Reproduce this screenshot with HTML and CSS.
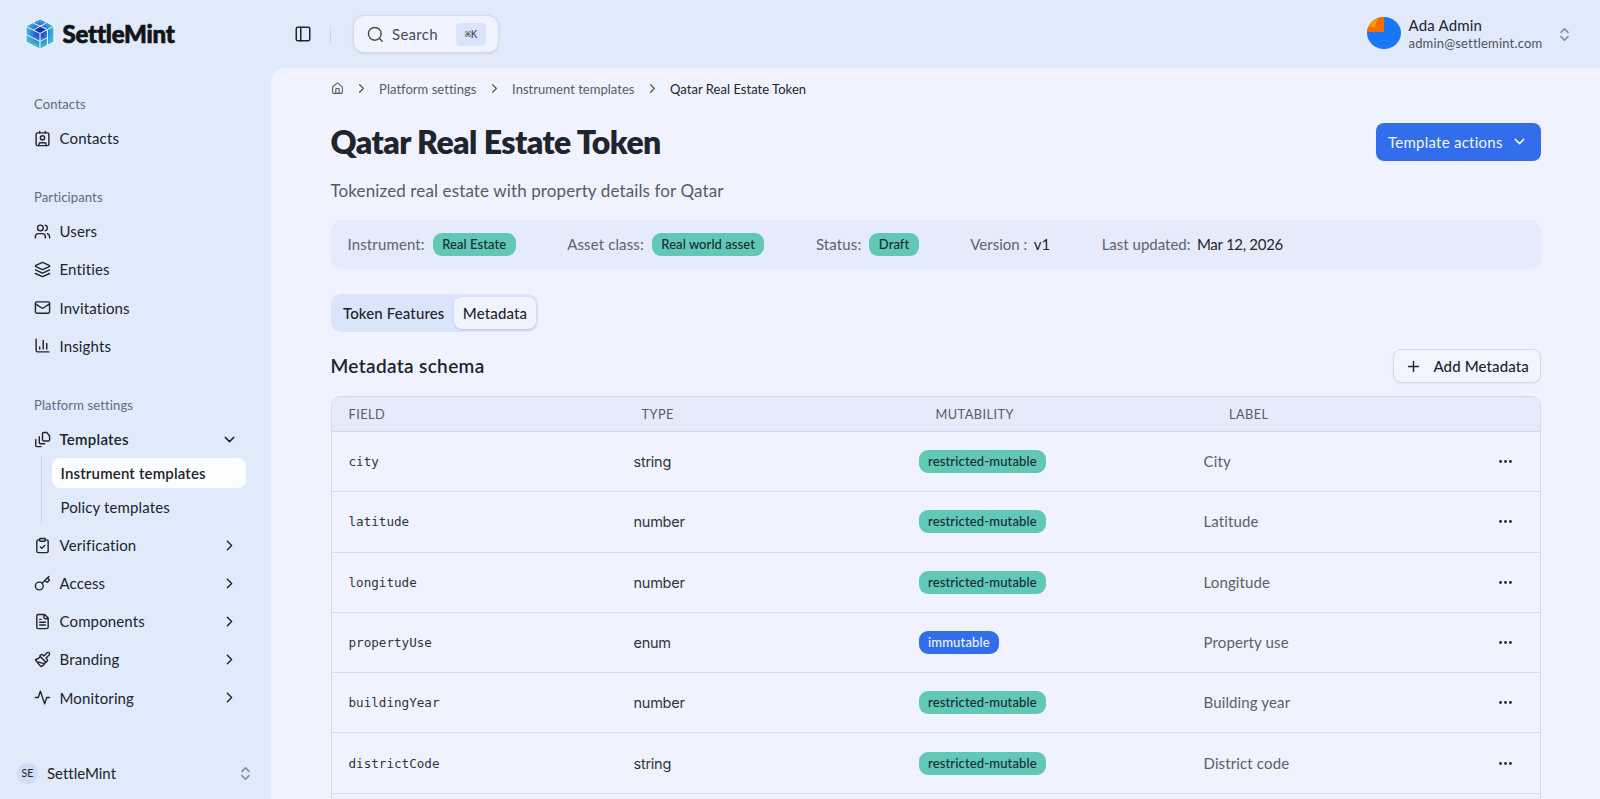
FILE: index.html
```html
<!DOCTYPE html>
<html lang="en">
<head>
    <meta charset="UTF-8">
    <meta name="viewport" content="width=device-width, initial-scale=1.0">
    <title>Qatar Real Estate Token</title>
    <link rel="stylesheet" href="styles.css">
</head>
<body>
    <!-- Icon sprite -->
    <svg class="sprite" width="0" height="0">
        <symbol id="contact" viewBox="0 0 24 24"><path d="M16 2v2M8 2v2M7 22v-2a2 2 0 0 1 2-2h6a2 2 0 0 1 2 2v2"/><circle cx="12" cy="11" r="3"/><rect x="3" y="4" width="18" height="18" rx="2"/></symbol>
        <symbol id="users" viewBox="0 0 24 24"><path d="M16 21v-2a4 4 0 0 0-4-4H6a4 4 0 0 0-4 4v2M22 21v-2a4 4 0 0 0-3-3.87M16 3.13a4 4 0 0 1 0 7.75"/><circle cx="9" cy="7" r="4"/></symbol>
        <symbol id="layers" viewBox="0 0 24 24"><path d="M12.83 2.18a2 2 0 0 0-1.66 0L2.6 6.08a1 1 0 0 0 0 1.83l8.58 3.91a2 2 0 0 0 1.66 0l8.58-3.9a1 1 0 0 0 0-1.83zM22 17.65l-9.17 4.16a2 2 0 0 1-1.66 0L2 17.65M22 12.65l-9.17 4.16a2 2 0 0 1-1.66 0L2 12.65"/></symbol>
        <symbol id="mail" viewBox="0 0 24 24"><rect x="2" y="4" width="20" height="16" rx="2"/><path d="m22 7-8.97 5.7a1.94 1.94 0 0 1-2.06 0L2 7"/></symbol>
        <symbol id="chart" viewBox="0 0 24 24"><path d="M3 3v16a2 2 0 0 0 2 2h16M18 17V9M13 17V5M8 17v-3"/></symbol>
        <symbol id="stack" viewBox="0 0 24 24"><path d="M17 2h-3.5c-.8 0-1.5.7-1.5 1.5v9c0 .8.7 1.5 1.5 1.5h7c.8 0 1.5-.7 1.5-1.5V7l-4-5zM7.5 8v8.5c0 .8.7 1.5 1.5 1.5h6M2.5 12v8.5c0 .8.7 1.5 1.5 1.5h6"/></symbol>
        <symbol id="clipboard" viewBox="0 0 24 24"><rect x="8" y="2" width="8" height="4" rx="1"/><path d="M16 4h2a2 2 0 0 1 2 2v14a2 2 0 0 1-2 2H6a2 2 0 0 1-2-2V6a2 2 0 0 1 2-2h2M9 14l2 2 4-4"/></symbol>
        <symbol id="key" viewBox="0 0 24 24"><path d="m15.5 7.5 2.3 2.3a1 1 0 0 0 1.4 0l2.1-2.1a1 1 0 0 0 0-1.4L19 4M21 2l-9.6 9.6"/><circle cx="7.5" cy="15.5" r="5.5"/></symbol>
        <symbol id="file" viewBox="0 0 24 24"><path d="M15 2H6a2 2 0 0 0-2 2v16a2 2 0 0 0 2 2h12a2 2 0 0 0 2-2V7ZM14 2v4a2 2 0 0 0 2 2h4M10 9H8M16 13H8M16 17H8"/></symbol>
        <symbol id="brush" viewBox="0 0 24 24"><path d="m14.622 17.897-10.68-2.913M18.376 2.622a1 1 0 1 1 3.002 3.002L17.36 9.643a.5.5 0 0 0 0 .707l.944.944a2.41 2.41 0 0 1 0 3.408l-.944.944a.5.5 0 0 1-.707 0L8.354 7.348a.5.5 0 0 1 0-.707l.944-.944a2.41 2.41 0 0 1 3.408 0l.944.944a.5.5 0 0 0 .707 0zM9 8c-1.804 2.71-3.97 3.46-6.583 3.948a.507.507 0 0 0-.302.819l7.32 8.883a1 1 0 0 0 1.185.204C12.735 20.405 16 16.792 16 15"/></symbol>
        <symbol id="activity" viewBox="0 0 24 24"><path d="M22 12h-4l-3 9L9 3l-3 9H2"/></symbol>
        <symbol id="down" viewBox="0 0 24 24"><path d="m6 9 6 6 6-6"/></symbol>
        <symbol id="right" viewBox="0 0 24 24"><path d="m9 18 6-6-6-6"/></symbol>
        <symbol id="updown" viewBox="0 0 24 24"><path d="m7 15 5 5 5-5M7 9l5-5 5 5"/></symbol>
        <symbol id="panel" viewBox="0 0 24 24"><rect x="3" y="3" width="18" height="18" rx="2"/><path d="M9 3v18"/></symbol>
        <symbol id="search" viewBox="0 0 24 24"><circle cx="11" cy="11" r="9"/><path d="m21.5 21.5-4-4"/></symbol>
        <symbol id="house" viewBox="0 0 24 24"><path d="M15 21v-8a1 1 0 0 0-1-1h-4a1 1 0 0 0-1 1v8M3 10a2 2 0 0 1 .709-1.528l7-5.999a2 2 0 0 1 2.582 0l7 5.999A2 2 0 0 1 21 10v9a2 2 0 0 1-2 2H5a2 2 0 0 1-2-2z"/></symbol>
        <symbol id="plus" viewBox="0 0 24 24"><path d="M5 12h14M12 5v14"/></symbol>
        <symbol id="dots" viewBox="0 0 24 24"><circle cx="5" cy="12" r="1"/><circle cx="12" cy="12" r="1"/><circle cx="19" cy="12" r="1"/></symbol>
    </svg>

    <aside class="sidebar">
        <div class="logo">
            <svg class="logo-mark" viewBox="0 0 30 32">
                <defs>
                    <radialGradient id="cube" cx="50%" cy="45%" r="54%">
                        <stop offset="0" stop-color="#1c3ab8"/>
                        <stop offset=".4" stop-color="#2a68dc"/>
                        <stop offset=".75" stop-color="#3fa9d2"/>
                        <stop offset="1" stop-color="#4cc4c0"/>
                    </radialGradient>
                </defs>
                <path d="M15 .8 29 8v16L15 31.2 1 24V8Z" fill="url(#cube)" stroke="#f4fbff" stroke-width="1" stroke-linejoin="round"/>
                <path d="M15 8.5l5.5 3-5.5 3.5-5.5-3.5z" fill="#1b2fa5"/>
                <path d="M1 8.5l14 7V31M15 15.5l7.5-4V27M8 5l14.5 6.5L29 8M8.5 12 21 5M1 16.5l14 7 7.5-4" fill="none" stroke="#eefaff" stroke-width="1"/>
            </svg>
            <span class="logo-text">SettleMint</span>
        </div>

        <nav class="nav">
            <div class="nav-label">Contacts</div>
            <a class="nav-item"><svg class="icon"><use href="#contact"/></svg><span>Contacts</span></a>

            <div class="nav-label">Participants</div>
            <a class="nav-item"><svg class="icon"><use href="#users"/></svg><span>Users</span></a>
            <a class="nav-item"><svg class="icon"><use href="#layers"/></svg><span>Entities</span></a>
            <a class="nav-item"><svg class="icon"><use href="#mail"/></svg><span>Invitations</span></a>
            <a class="nav-item"><svg class="icon"><use href="#chart"/></svg><span>Insights</span></a>

            <div class="nav-label">Platform settings</div>
            <a class="nav-item open"><svg class="icon"><use href="#stack"/></svg><span>Templates</span><svg class="icon arrow"><use href="#down"/></svg></a>
            <div class="subnav">
                <a class="subnav-item active">Instrument templates</a>
                <a class="subnav-item">Policy templates</a>
            </div>
            <a class="nav-item"><svg class="icon"><use href="#clipboard"/></svg><span>Verification</span><svg class="icon arrow"><use href="#right"/></svg></a>
            <a class="nav-item"><svg class="icon"><use href="#key"/></svg><span>Access</span><svg class="icon arrow"><use href="#right"/></svg></a>
            <a class="nav-item"><svg class="icon"><use href="#file"/></svg><span>Components</span><svg class="icon arrow"><use href="#right"/></svg></a>
            <a class="nav-item"><svg class="icon"><use href="#brush"/></svg><span>Branding</span><svg class="icon arrow"><use href="#right"/></svg></a>
            <a class="nav-item"><svg class="icon"><use href="#activity"/></svg><span>Monitoring</span><svg class="icon arrow"><use href="#right"/></svg></a>
        </nav>

        <div class="org">
            <span class="org-badge">SE</span>
            <span class="org-name">SettleMint</span>
            <svg class="icon muted"><use href="#updown"/></svg>
        </div>
    </aside>

    <div class="page">
        <header class="topbar">
            <svg class="icon panel"><use href="#panel"/></svg>
            <span class="divider"></span>
            <button class="search">
                <svg class="icon"><use href="#search"/></svg>
                <span>Search</span>
                <kbd>⌘K</kbd>
            </button>
            <div class="user">
                <svg class="avatar" viewBox="0 0 34 32">
                    <defs><clipPath id="round"><ellipse cx="17" cy="16" rx="17" ry="16"/></clipPath></defs>
                    <g clip-path="url(#round)">
                        <rect width="34" height="34" fill="#1877f6"/>
                        <rect width="17" height="15" fill="#f76c05"/>
                        <path d="M0 9V0h11L8 11z" fill="#fd9905"/>
                    </g>
                </svg>
                <div class="user-text">
                    <span class="user-name">Ada Admin</span>
                    <span class="user-mail">admin@settlemint.com</span>
                </div>
                <svg class="icon muted"><use href="#updown"/></svg>
            </div>
        </header>

        <main class="content">
            <div class="breadcrumb">
                <svg class="icon home"><use href="#house"/></svg>
                <svg class="icon sep"><use href="#right"/></svg>
                <a>Platform settings</a>
                <svg class="icon sep"><use href="#right"/></svg>
                <a>Instrument templates</a>
                <svg class="icon sep"><use href="#right"/></svg>
                <span class="current">Qatar Real Estate Token</span>
            </div>

            <div class="title-row">
                <h1>Qatar Real Estate Token</h1>
                <button class="primary">Template actions<svg class="icon"><use href="#down"/></svg></button>
            </div>
            <p class="subtitle">Tokenized real estate with property details for Qatar</p>

            <div class="info">
                <div class="info-item"><span class="info-label">Instrument:</span><span class="badge">Real Estate</span></div>
                <div class="info-item"><span class="info-label">Asset class:</span><span class="badge">Real world asset</span></div>
                <div class="info-item"><span class="info-label">Status:</span><span class="badge">Draft</span></div>
                <div class="info-item plain"><span class="info-label">Version :</span><span>v1</span></div>
                <div class="info-item plain"><span class="info-label">Last updated:</span><span class="date">Mar 12, 2026</span></div>
            </div>

            <div class="tabs">
                <button class="tab">Token Features</button>
                <button class="tab active">Metadata</button>
            </div>

            <div class="section-head">
                <h2>Metadata schema</h2>
                <button class="outline"><svg class="icon"><use href="#plus"/></svg>Add Metadata</button>
            </div>

            <div class="table">
                <div class="row head"><span>Field</span><span>Type</span><span>Mutability</span><span>Label</span><span></span></div>
                <div class="row"><code>city</code><span class="type">string</span><span><b class="badge">restricted-mutable</b></span><span class="label">City</span><svg class="icon dots"><use href="#dots"/></svg></div>
                <div class="row"><code>latitude</code><span class="type">number</span><span><b class="badge">restricted-mutable</b></span><span class="label">Latitude</span><svg class="icon dots"><use href="#dots"/></svg></div>
                <div class="row"><code>longitude</code><span class="type">number</span><span><b class="badge">restricted-mutable</b></span><span class="label">Longitude</span><svg class="icon dots"><use href="#dots"/></svg></div>
                <div class="row"><code>propertyUse</code><span class="type">enum</span><span><b class="badge blue">immutable</b></span><span class="label">Property use</span><svg class="icon dots"><use href="#dots"/></svg></div>
                <div class="row"><code>buildingYear</code><span class="type">number</span><span><b class="badge">restricted-mutable</b></span><span class="label">Building year</span><svg class="icon dots"><use href="#dots"/></svg></div>
                <div class="row"><code>districtCode</code><span class="type">string</span><span><b class="badge">restricted-mutable</b></span><span class="label">District code</span><svg class="icon dots"><use href="#dots"/></svg></div>
                <div class="row"></div>
            </div>
        </main>
    </div>
</body>
</html>
```
FILE: styles.css
```css
* {
    box-sizing: border-box;
}

body {
    margin: 0;
    height: 799px;
    overflow: hidden;
    display: flex;
    background-color: #e1eafb;
    font-family: Lato, "Liberation Sans", sans-serif;
    font-size: 15px;
    font-variant-ligatures: none;
    letter-spacing: 0.13px;
    color: #20242c;
    white-space: nowrap;
}

button {
    font: inherit;
    letter-spacing: inherit;
    color: inherit;
    border: none;
    padding: 0;
    display: flex;
    align-items: center;
}

.sprite {
    position: absolute;
}

.icon {
    width: 17px;
    height: 17px;
    flex: none;
    fill: none;
    stroke: currentColor;
    stroke-width: 2;
    stroke-linecap: round;
    stroke-linejoin: round;
}

.muted {
    color: #7d8798;
}

/* Sidebar */
.sidebar {
    width: 271px;
    flex: none;
    display: flex;
    flex-direction: column;
}

.logo {
    height: 68px;
    padding-left: 25px;
    display: flex;
    align-items: center;
    gap: 7.5px;
}

.logo-mark {
    width: 30px;
    height: 32px;
}

.logo-text {
    padding-bottom: 1px;
    font-size: 24px;
    font-weight: 900;
    letter-spacing: -0.2px;
    -webkit-text-stroke: 0.7px #111518;
    color: #111518;
}

.nav {
    flex: 1;
    padding: 19px 25px 0 34px;
}

.nav-label {
    height: 34px;
    line-height: 34px;
    font-size: 13px;
    color: #606b7c;
}

.nav-item + .nav-label {
    margin-top: 25.4px;
}

.nav-item {
    height: 34px;
    display: flex;
    align-items: center;
    gap: 8.5px;
}

.nav-item + .nav-item,
.subnav + .nav-item {
    margin-top: 4.1px;
}

.nav-item.open {
    font-weight: 600;
    letter-spacing: 0.25px;
}

.arrow {
    margin-left: auto;
    margin-right: 8.5px;
}

.subnav {
    margin-left: 7px;
    padding: 2px 0 2px 10px;
    border-left: 1px solid #cbd5e8;
    height: 68px;
}

.subnav-item {
    display: block;
    height: 30px;
    line-height: 30px;
    padding-left: 8.5px;
    margin-bottom: 4px;
    border-radius: 8px;
}

.subnav-item.active {
    background-color: #fcfdff;
    font-weight: 600;
    letter-spacing: 0.17px;
}

.org {
    height: 52px;
    padding: 0 17px;
    display: flex;
    align-items: center;
}

.org-badge {
    width: 21px;
    height: 21px;
    line-height: 21px;
    border-radius: 50%;
    background-color: #cfdcfa;
    text-align: center;
    font-size: 10.5px;
}

.org-name {
    flex: 1;
    margin-left: 9px;
    letter-spacing: 0;
}

/* Top bar */
.page {
    flex: 1;
    min-width: 0;
}

.topbar {
    height: 68px;
    padding: 0 27px 0 23px;
    display: flex;
    align-items: center;
}

.panel {
    width: 18px;
    height: 18px;
}

.divider {
    width: 1px;
    height: 17px;
    margin: 0 22px 0 18px;
    background-color: #ccd5e6;
}

.search {
    width: 146px;
    height: 38px;
    padding: 0 13px;
    border: 1px solid #d3daea;
    border-radius: 11px;
    background-color: #f1f4ff;
    box-shadow: 0 1px 2px rgba(60, 80, 120, 0.12);
    letter-spacing: 0.3px;
    color: #444c59;
}

.search span {
    margin-left: 8px;
}

.search kbd {
    width: 30px;
    height: 23px;
    line-height: 23px;
    margin-left: auto;
    margin-right: -1px;
    border-radius: 4px;
    background-color: #d9e4fc;
    text-align: center;
    font-family: "DejaVu Sans Mono", monospace;
    font-size: 10.5px;
    letter-spacing: 0;
}

.user {
    margin-left: auto;
    display: flex;
    align-items: center;
}

.avatar {
    width: 34px;
    height: 32px;
    margin-right: 8px;
    margin-top: -3px;
}

.user-text {
    display: flex;
    flex-direction: column;
    width: 147.5px;
    padding-top: 1px;
}

.user-name {
    line-height: 17px;
    letter-spacing: 0.2px;
}

.user-mail {
    font-size: 13px;
    line-height: 18px;
    letter-spacing: 0.18px;
    color: #4a5260;
}

/* Content */
.content {
    height: 731px;
    overflow: hidden;
    padding: 10px 59px 0 59.5px;
    border-radius: 14px 0 0 0;
    background-color: #f0f3ff;
}

.breadcrumb {
    height: 21px;
    display: flex;
    align-items: center;
    font-size: 13px;
    letter-spacing: 0.03px;
    color: #555c68;
}

.home {
    width: 13px;
    height: 13px;
}

.sep {
    width: 15px;
    height: 15px;
    margin: 0 10.3px;
}

.current {
    color: #20242c;
}

.title-row {
    height: 38px;
    margin-top: 24px;
    display: flex;
    align-items: center;
    justify-content: space-between;
}

h1 {
    margin: 0;
    padding-bottom: 2px;
    font-size: 32px;
    font-weight: 800;
    letter-spacing: -0.55px;
}

.primary {
    width: 165.5px;
    height: 38px;
    padding: 0 13px 1px 12.5px;
    justify-content: space-between;
    border-radius: 8px;
    background-color: #326dec;
    letter-spacing: 0.25px;
    color: #f3f7ff;
}

.subtitle {
    height: 26px;
    line-height: 26px;
    margin: 17px 0 16px;
    font-size: 17px;
    letter-spacing: 0.12px;
    color: #555b66;
}

.info {
    height: 48.5px;
    padding-left: 17px;
    display: flex;
    align-items: center;
    border-radius: 11px;
    background-color: #e6ebfb;
}

.info-item {
    display: flex;
    align-items: center;
    gap: 8px;
    margin-right: 51.5px;
}

.info-item.plain {
    gap: 6.5px;
    letter-spacing: 0;
}

.info-label {
    color: #5c6370;
}

.date {
    letter-spacing: -0.3px;
}

.badge {
    display: inline-block;
    height: 23px;
    line-height: 23px;
    padding: 0 9.5px;
    border-radius: 9px;
    background-color: #61c8b5;
    font-size: 13px;
    font-weight: 500;
    letter-spacing: 0.15px;
    color: #152b33;
}

.info .badge {
    letter-spacing: 0.06px;
}

.badge.blue {
    background-color: #326dec;
    color: #f1f6ff;
}

.tabs {
    width: 207.5px;
    height: 38px;
    margin-top: 25.5px;
    padding: 3px 2px 3px 3px;
    display: flex;
    border-radius: 10px;
    background-color: #dae5fc;
}

.tab {
    flex: 1;
    justify-content: center;
    border-radius: 8px;
    background: none;
    font-weight: 500;
}

.tab.active {
    flex: 0 0 82px;
    background-color: #f1f4ff;
    box-shadow: 0 1px 2px rgba(50, 70, 120, 0.2);
}

.section-head {
    height: 34px;
    margin: 17px 0 13px;
    display: flex;
    align-items: center;
    justify-content: space-between;
}

h2 {
    margin: 0;
    padding-bottom: 1px;
    font-size: 19px;
    font-weight: 600;
    letter-spacing: 0.35px;
}

.outline {
    width: 148px;
    height: 34px;
    padding: 0 11px;
    justify-content: space-between;
    border: 1px solid #d5d9e8;
    border-radius: 8px;
    background-color: #f2f5ff;
    box-shadow: 0 1px 2px rgba(60, 80, 120, 0.08);
    font-weight: 500;
}

/* Table */
.table {
    border: 1px solid #d6dae8;
    border-radius: 9px 9px 0 0;
    overflow: hidden;
}

.row {
    height: 60.3px;
    display: grid;
    grid-template-columns: 285px 285px 285px 285px 1fr;
    align-items: center;
    padding-left: 17px;
    border-bottom: 1px solid #d6dae8;
}

.row.head {
    height: 35px;
    grid-template-columns: 293px 294px 293.5px 277px 1fr;
    background-color: #e5ebfb;
    font-size: 12.75px;
    letter-spacing: 0.45px;
    text-transform: uppercase;
    color: #555c68;
}

code {
    font-family: "DejaVu Sans Mono", monospace;
    font-size: 12.6px;
    letter-spacing: 0;
    color: #2f343c;
}

.type {
    font-family: Inter, sans-serif;
    font-size: 14.5px;
    letter-spacing: -0.25px;
    color: #2f343c;
}

.label {
    padding-bottom: 1px;
    letter-spacing: 0.13px;
    color: #5a606b;
}

.dots {
    margin-left: 8.5px;
}
```
